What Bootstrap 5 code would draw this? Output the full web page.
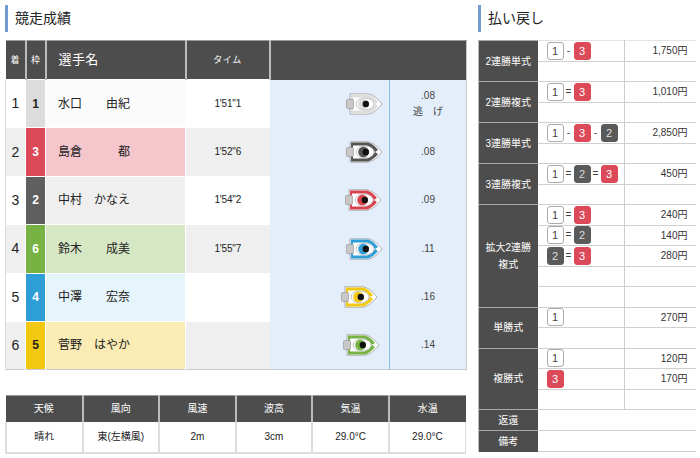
<!DOCTYPE html>
<html lang="ja">
<head>
<meta charset="utf-8">
<title>競走成績</title>
<link href="https://cdn.jsdelivr.net/npm/bootstrap@5.3.0/dist/css/bootstrap.min.css" rel="stylesheet">
<style>
body{font-family:"Liberation Sans","Noto Sans CJK JP",sans-serif;color:#222;background:#fff;font-size:10px;overflow:hidden}
.page-wrap{padding:5px 5px 0;gap:12px;width:700px}
.left-col{width:461px;flex:none}
.right-col{width:217px;flex:none}
.sec-title{font-size:14px;font-weight:400;line-height:27px;height:27px;margin:0 0 8px;padding-left:7px;border-left:3px solid #739bcf;color:#222}
.tbl.table{table-layout:fixed;border-collapse:collapse;margin:0;--bs-table-bg:transparent;color:#222;font-size:10px}
.tbl.table th,.tbl.table td{padding:0;vertical-align:middle;text-align:center;border:0;box-shadow:none;line-height:1.2}
.tbl.table thead th{background:#4d4d4d;color:#fff;font-weight:400;border-left:2px solid #bbb;border-top:1px solid #999}
.tbl.table thead th:first-child{border-left:0}
.race-tbl.table{border-bottom:1px solid #c8ccd0;border-right:1px solid #c8ccd0}
.race-tbl thead tr{height:39px}
.race-tbl.table tbody tr{height:48.4px}
.race-tbl.table tbody td{border-top:1px solid #fff}
.race-tbl.table .no{font-size:14px;border-left:1px solid #ddd;color:#222}
.race-tbl.table .alt{background:#efefef}
.race-tbl.table .fr{font-size:12px;font-weight:700;color:#fff;border-left:1px solid #fff;border-right:1px solid #fff}
.race-tbl.table .nm{font-size:12px;text-align:left;padding-left:12px;color:#222}
.race-tbl.table .tm{font-size:10px;border-left:1px solid #fff;letter-spacing:-.2px}
.race-tbl.table .bt{background:#e3eefa;text-align:left;border-top:0;line-height:0}
.race-tbl.table .st{background:#e3eefa;border-left:1px solid #8ebde4;border-top:0;line-height:16px;color:#444}
.race-tbl.table thead .hsm{font-size:9px}
.race-tbl.table thead .hnm{font-size:13px;text-align:left;padding-left:12px;letter-spacing:.4px}
.c1{background:#dcdcdc!important;color:#222!important}
.c2{background:#5f5f5f!important}
.c3{background:#dc4a5a!important}
.c4{background:#2e9fd6!important}
.c5{background:#f2c811!important;color:#222!important}
.c6{background:#76b343!important}
.n1{background:#fbfbfb!important}
.n2{background:#f5c6cb!important}
.n3{background:#efefef!important}
.n4{background:#d6e7c4!important}
.n5{background:#e6f4fb!important}
.n6{background:#faecb4!important}
.boat{width:37px;height:22px;display:inline-block}
.wx-wrap{margin-top:25px}
.wx-tbl thead tr{height:26px}
.wx-tbl.table tbody tr{height:31px}
.wx-tbl.table tbody td{border-left:2px solid #ddd;border-bottom:2px solid #ddd}
.wx-tbl.table tbody td:last-child{border-right:1px solid #ddd}
.pay-tbl.table{border-top:1px solid #e4e4e4}
.pay-tbl.table tr{height:20.5px}
.pay-tbl.table th{width:59px;background:#4d4d4d;color:#fff;font-weight:400;line-height:17px;border-top:1px solid #aaa;border-left:1px solid #bbb}
.pay-tbl.table td{height:20.5px;border-bottom:1px solid #d0d0d0;text-align:left}
.pay-tbl.table .blk td{border-top:1px solid #e4e4e4}
.pay-tbl.table .one td{height:21px}
.pay-tbl.table .cmb{width:87px;padding-left:9px;border-right:1px solid #ccc;white-space:nowrap;line-height:0}
.pay-tbl.table .amt{text-align:right;padding-right:8px;vertical-align:top;padding-top:3px;line-height:13px;color:#333}
.chip{display:inline-block;width:17px;height:18px;line-height:16px;border:1px solid #aaa;border-radius:3px;background:#fff;color:#444;font-size:11px;text-align:center;vertical-align:top}
.chip.cr{background:#dc4a5a;border-color:#dc4a5a;color:#fff}
.chip.cg{background:#5a5a5a;border-color:#5a5a5a;color:#ddd}
.sep{display:inline-block;width:10px;line-height:17px;text-align:center;font-size:10px;color:#444;vertical-align:top}
.sp-lbl{letter-spacing:.6px}
</style>
</head>
<body>
<svg width="0" height="0" class="position-absolute">
<symbol id="boat" viewBox="0 0 37 22">
<path d="M4 .8H22C27 1.500 32 6 36 11C32 16 27 20.500 22 21.200H4Z" fill="#fff" stroke="#999" stroke-width=".8"/>
<path d="M5 1.600H22C25.500 2.300 29 5.200 32 9L29 11L32 13C29 16.800 25.500 19.700 22 20.400H5Z" fill="currentColor"/>
<path d="M7 4.500H21C24 5 27 7.500 29 11C27 14.500 24 17 21 17.500H7Z" fill="#fff"/>
<rect x=".5" y="6.500" width="7" height="9" rx="1" fill="#c8c8c8" stroke="#999" stroke-width=".7"/>
<ellipse cx="19" cy="11" rx="9" ry="6" fill="#fff" stroke="#999" stroke-width=".6"/>
<circle cx="17.500" cy="11" r="5.300" fill="currentColor"/>
<circle cx="19.800" cy="11" r="3.200" fill="#111"/>
</symbol>
</svg>
<div class="d-flex align-items-start page-wrap">
  <div class="left-col">
    <h2 class="sec-title">競走成績</h2>
    <table class="table tbl race-tbl">
      <colgroup><col style="width:20px"><col style="width:20px"><col style="width:140px"><col style="width:84px"><col style="width:120px"><col style="width:77px"></colgroup>
      <thead><tr><th class="hsm">着</th><th class="hsm">枠</th><th class="hnm">選手名</th><th class="hsm sp-lbl">タイム</th><th colspan="2"></th></tr></thead>
      <tbody>
        <tr><td class="no">1</td><td class="fr c1">1</td><td class="nm n1">水口　　由紀</td><td class="tm">1'51"1</td><td class="bt" style="padding-left:76px"><svg class="boat" style="color:#dcdcdc"><use href="#boat"/></svg></td><td class="st">.08<br>逃　げ</td></tr>
        <tr><td class="no alt">2</td><td class="fr c3">3</td><td class="nm n2">島倉　　　都</td><td class="tm alt">1'52"6</td><td class="bt" style="padding-left:76px"><svg class="boat" style="color:#555"><use href="#boat"/></svg></td><td class="st">.08</td></tr>
        <tr><td class="no">3</td><td class="fr c2">2</td><td class="nm n3">中村　かなえ</td><td class="tm">1'54"2</td><td class="bt" style="padding-left:75px"><svg class="boat" style="color:#d8434f"><use href="#boat"/></svg></td><td class="st">.09</td></tr>
        <tr><td class="no alt">4</td><td class="fr c6">6</td><td class="nm n4">鈴木　　成美</td><td class="tm alt">1'55"7</td><td class="bt" style="padding-left:76px"><svg class="boat" style="color:#2e9fd6"><use href="#boat"/></svg></td><td class="st">.11</td></tr>
        <tr><td class="no">5</td><td class="fr c4">4</td><td class="nm n5">中澤　　宏奈</td><td class="tm"></td><td class="bt" style="padding-left:71px"><svg class="boat" style="color:#f2c811"><use href="#boat"/></svg></td><td class="st">.16</td></tr>
        <tr><td class="no alt">6</td><td class="fr c5">5</td><td class="nm n6">菅野　はやか</td><td class="tm alt"></td><td class="bt" style="padding-left:73px"><svg class="boat" style="color:#76b343"><use href="#boat"/></svg></td><td class="st">.14</td></tr>
      </tbody>
    </table>
    <div class="wx-wrap">
      <table class="table tbl wx-tbl">
        <thead><tr><th>天候</th><th>風向</th><th>風速</th><th>波高</th><th>気温</th><th>水温</th></tr></thead>
        <tbody><tr><td>晴れ</td><td>東(左横風)</td><td>2m</td><td>3cm</td><td>29.0°C</td><td>29.0°C</td></tr></tbody>
      </table>
    </div>
  </div>
  <div class="right-col">
    <h2 class="sec-title">払い戻し</h2>
    <table class="table tbl pay-tbl">
      <colgroup><col style="width:59px"><col style="width:87px"><col style="width:71px"></colgroup>
      <tbody>
        <tr class="blk"><th rowspan="2">2連勝単式</th><td class="cmb"><span class="chip">1</span><span class="sep">-</span><span class="chip cr">3</span></td><td class="amt">1,750円</td></tr>
        <tr><td class="cmb"></td><td></td></tr>
        <tr class="blk"><th rowspan="2">2連勝複式</th><td class="cmb"><span class="chip">1</span><span class="sep">=</span><span class="chip cr">3</span></td><td class="amt">1,010円</td></tr>
        <tr><td class="cmb"></td><td></td></tr>
        <tr class="blk"><th rowspan="2">3連勝単式</th><td class="cmb"><span class="chip">1</span><span class="sep">-</span><span class="chip cr">3</span><span class="sep">-</span><span class="chip cg">2</span></td><td class="amt">2,850円</td></tr>
        <tr><td class="cmb"></td><td></td></tr>
        <tr class="blk"><th rowspan="2">3連勝複式</th><td class="cmb"><span class="chip">1</span><span class="sep">=</span><span class="chip cg">2</span><span class="sep">=</span><span class="chip cr">3</span></td><td class="amt">450円</td></tr>
        <tr><td class="cmb"></td><td></td></tr>
        <tr class="blk"><th rowspan="5">拡大2連勝<br>複式</th><td class="cmb"><span class="chip">1</span><span class="sep">=</span><span class="chip cr">3</span></td><td class="amt">240円</td></tr>
        <tr><td class="cmb"><span class="chip">1</span><span class="sep">=</span><span class="chip cg">2</span></td><td class="amt">140円</td></tr>
        <tr><td class="cmb"><span class="chip cg">2</span><span class="sep">=</span><span class="chip cr">3</span></td><td class="amt">280円</td></tr>
        <tr><td class="cmb"></td><td></td></tr>
        <tr><td class="cmb"></td><td></td></tr>
        <tr class="blk"><th rowspan="2">単勝式</th><td class="cmb"><span class="chip">1</span></td><td class="amt">270円</td></tr>
        <tr><td class="cmb"></td><td></td></tr>
        <tr class="blk"><th rowspan="3">複勝式</th><td class="cmb"><span class="chip">1</span></td><td class="amt">120円</td></tr>
        <tr><td class="cmb"><span class="chip cr">3</span></td><td class="amt">170円</td></tr>
        <tr><td class="cmb"></td><td></td></tr>
        <tr class="blk one"><th>返還</th><td colspan="2"></td></tr>
        <tr class="blk one"><th>備考</th><td colspan="2"></td></tr>
      </tbody>
    </table>
  </div>
</div>
</body>
</html>
